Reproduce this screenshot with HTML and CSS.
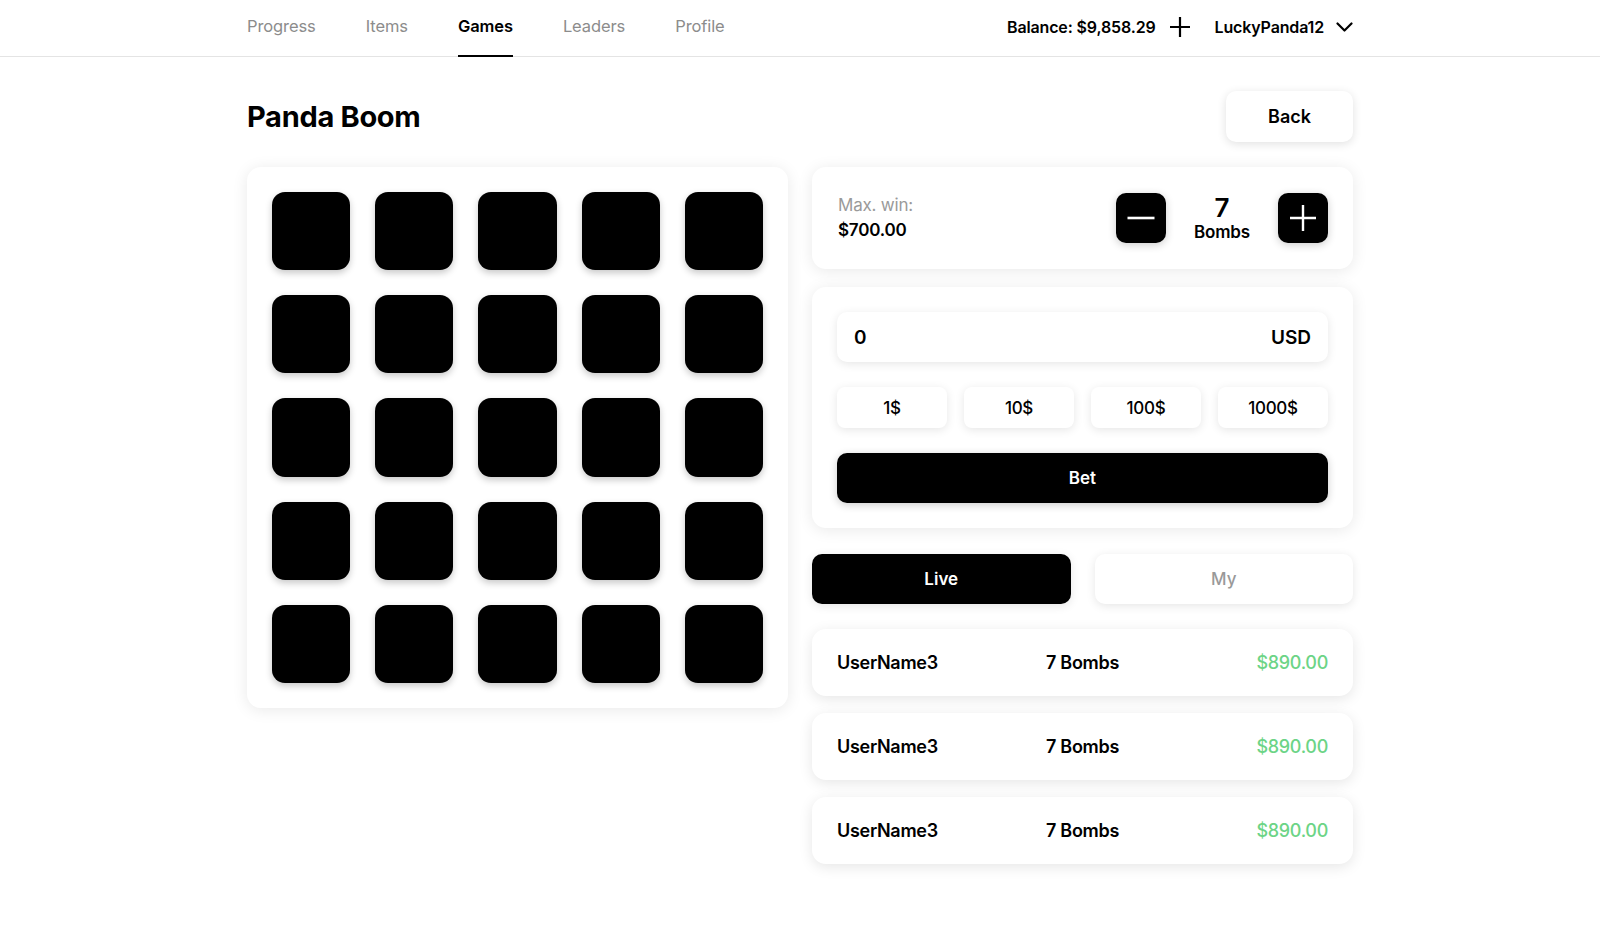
FILE: index.html
```html
<!DOCTYPE html>
<html lang="en">
<head>
<meta charset="utf-8">
<title>Panda Boom</title>
<link rel="stylesheet" href="styles.css">
</head>
<body>
<header class="topbar">
  <div class="topbar-inner">
    <nav class="nav">
      <a class="nav-link">Progress</a>
      <a class="nav-link">Items</a>
      <a class="nav-link is-active">Games</a>
      <a class="nav-link">Leaders</a>
      <a class="nav-link">Profile</a>
    </nav>
    <div class="account">
      <span class="balance">Balance: $9,858.29</span>
      <svg class="icon-plus" width="20" height="20" viewBox="0 0 20 20" fill="none" stroke="#000" stroke-width="2.2" stroke-linecap="square"><path d="M10 1v18M1 10h18"/></svg>
      <span class="username">LuckyPanda12</span>
      <svg class="icon-chevron" width="17" height="10" viewBox="0 0 17 10" fill="none" stroke="#000" stroke-width="2.2" stroke-linecap="round" stroke-linejoin="round"><path d="M1.5 1.5l7 7 7-7"/></svg>
    </div>
  </div>
</header>

<main class="page">
  <div class="title-row">
    <h1 class="title">Panda Boom</h1>
    <button class="btn-back">Back</button>
  </div>

  <div class="layout">
    <section class="board">
      <div class="tile"></div><div class="tile"></div><div class="tile"></div><div class="tile"></div><div class="tile"></div>
      <div class="tile"></div><div class="tile"></div><div class="tile"></div><div class="tile"></div><div class="tile"></div>
      <div class="tile"></div><div class="tile"></div><div class="tile"></div><div class="tile"></div><div class="tile"></div>
      <div class="tile"></div><div class="tile"></div><div class="tile"></div><div class="tile"></div><div class="tile"></div>
      <div class="tile"></div><div class="tile"></div><div class="tile"></div><div class="tile"></div><div class="tile"></div>
    </section>

    <section class="side">
      <div class="card win-card">
        <div class="win">
          <div class="win-label">Max. win:</div>
          <div class="win-value">$700.00</div>
        </div>
        <div class="bombs">
          <button class="step">
            <svg width="28" height="28" viewBox="0 0 28 28" fill="none" stroke="#fff" stroke-width="2.6"><path d="M0.5 14h27"/></svg>
          </button>
          <div class="bombs-count">
            <div class="bombs-num">7</div>
            <div class="bombs-label">Bombs</div>
          </div>
          <button class="step">
            <svg width="28" height="28" viewBox="0 0 28 28" fill="none" stroke="#fff" stroke-width="2.4"><path d="M14 1v26M1 14h26"/></svg>
          </button>
        </div>
      </div>

      <div class="card bet-card">
        <div class="amount">
          <span>0</span>
          <span>USD</span>
        </div>
        <div class="chips">
          <button class="chip">1$</button>
          <button class="chip">10$</button>
          <button class="chip">100$</button>
          <button class="chip">1000$</button>
        </div>
        <button class="btn-bet">Bet</button>
      </div>

      <div class="tabs">
        <button class="tab is-active">Live</button>
        <button class="tab">My</button>
      </div>

      <div class="feed">
        <div class="feed-row">
          <span class="feed-user">UserName3</span>
          <span class="feed-bombs">7 Bombs</span>
          <span class="feed-win">$890.00</span>
        </div>
        <div class="feed-row">
          <span class="feed-user">UserName3</span>
          <span class="feed-bombs">7 Bombs</span>
          <span class="feed-win">$890.00</span>
        </div>
        <div class="feed-row">
          <span class="feed-user">UserName3</span>
          <span class="feed-bombs">7 Bombs</span>
          <span class="feed-win">$890.00</span>
        </div>
      </div>
    </section>
  </div>
</main>
</body>
</html>
```

FILE: styles.css
```css
* {
  box-sizing: border-box;
}

body {
  margin: 0;
  background: #fff;
  color: #000;
  font-family: Inter, "Noto Sans", "Liberation Sans", sans-serif;
}

button {
  font-family: inherit;
  border: 0;
  cursor: pointer;
  padding: 0;
}

/* ---------- top bar ---------- */
.topbar {
  height: 57px;
  box-shadow: inset 0 -1px 0 #e4e4e4;
}

.topbar-inner {
  width: 1106px;
  height: 57px;
  margin: 0 auto;
  display: flex;
  justify-content: space-between;
}

.nav {
  display: flex;
  gap: 50px;
}

.nav-link {
  display: flex;
  align-items: center;
  padding-bottom: 4px;
  border-bottom: 2px solid transparent;
  font-size: 16.5px;
  color: #8c8c8c;
  letter-spacing: -0.1px;
}

.nav-link.is-active {
  color: #000;
  font-weight: 600;
  border-bottom-color: #000;
}

.account {
  display: flex;
  align-items: center;
  padding-bottom: 4px;
  font-size: 16px;
  font-weight: 600;
  letter-spacing: -0.15px;
}

.icon-plus {
  margin-left: 14px;
}

.username {
  margin-left: 25px;
}

.icon-chevron {
  margin-left: 12px;
}

/* ---------- page ---------- */
.page {
  width: 1106px;
  margin: 34px auto 0;
  padding-bottom: 80px;
}

.title-row {
  display: flex;
  justify-content: space-between;
  align-items: center;
  height: 51px;
}

.title {
  margin: 0;
  font-size: 29px;
  font-weight: 700;
  letter-spacing: -0.3px;
}

.btn-back {
  width: 127px;
  height: 51px;
  background: #fff;
  border-radius: 10px;
  box-shadow: 0 2px 10px rgba(0, 0, 0, 0.12);
  font-size: 18px;
  font-weight: 600;
  color: #000;
}

.layout {
  display: grid;
  grid-template-columns: 541px 541px;
  gap: 24px;
  margin-top: 25px;
  align-items: start;
}

.card,
.board {
  background: #fff;
  border-radius: 14px;
  box-shadow: 0 2px 16px rgba(0, 0, 0, 0.09);
}

/* ---------- board ---------- */
.board {
  padding: 25px;
  display: grid;
  grid-template-columns: repeat(5, 1fr);
  gap: 25px;
}

.tile {
  aspect-ratio: 1;
  background: #000;
  border-radius: 13px;
  box-shadow: 0 3px 7px rgba(0, 0, 0, 0.22);
}

/* ---------- side panel ---------- */
.side {
  display: flex;
  flex-direction: column;
}

.win-card {
  height: 102px;
  padding: 0 25px 0 26px;
  display: flex;
  align-items: center;
  justify-content: space-between;
  margin-bottom: 18px;
}

.win {
  font-size: 17px;
  line-height: 25px;
  letter-spacing: -0.2px;
}

.win-label {
  color: #9a9a9a;
}

.win-value {
  font-weight: 600;
}

.bombs {
  display: flex;
  align-items: center;
  gap: 26px;
}

.step {
  width: 50px;
  height: 50px;
  border-radius: 10px;
  background: #000;
  display: flex;
  align-items: center;
  justify-content: center;
  box-shadow: 0 2px 8px rgba(0, 0, 0, 0.2);
}

.step svg {
  display: block;
}

.bombs-count {
  width: 60px;
  text-align: center;
  margin-top: 1px;
}

.bombs-num {
  font-size: 26px;
  font-weight: 600;
  line-height: 27px;
}

.bombs-label {
  font-size: 17px;
  font-weight: 600;
  line-height: 22px;
  letter-spacing: -0.2px;
}

.bet-card {
  padding: 25px;
  display: flex;
  flex-direction: column;
  gap: 25px;
  margin-bottom: 26px;
}

.amount {
  height: 50px;
  border-radius: 10px;
  background: #fff;
  box-shadow: 0 2px 10px rgba(0, 0, 0, 0.1);
  padding: 0 17px;
  display: flex;
  align-items: center;
  justify-content: space-between;
  font-size: 19px;
  font-weight: 600;
}

.chips {
  display: grid;
  grid-template-columns: repeat(4, 1fr);
  gap: 17px;
}

.chip {
  height: 41px;
  border-radius: 8px;
  background: #fff;
  box-shadow: 0 2px 10px rgba(0, 0, 0, 0.1);
  font-size: 17px;
  font-weight: 500;
  color: #000;
  letter-spacing: -0.3px;
}

.btn-bet {
  height: 50px;
  border-radius: 10px;
  background: #000;
  color: #fff;
  font-size: 17px;
  font-weight: 600;
  box-shadow: 0 2px 8px rgba(0, 0, 0, 0.2);
}

.tabs {
  display: grid;
  grid-template-columns: 1fr 1fr;
  gap: 24px;
  margin-bottom: 25px;
}

.tab {
  height: 50px;
  border-radius: 10px;
  background: #fff;
  box-shadow: 0 2px 10px rgba(0, 0, 0, 0.1);
  font-size: 17px;
  font-weight: 500;
  color: #999;
}

.tab.is-active {
  background: #000;
  color: #fff;
  font-weight: 600;
}

.feed {
  display: flex;
  flex-direction: column;
  gap: 17.5px;
}

.feed-row {
  height: 66.5px;
  border-radius: 14px;
  background: #fff;
  box-shadow: 0 3px 14px rgba(0, 0, 0, 0.1);
  padding: 0 25px;
  display: grid;
  grid-template-columns: 1fr auto 1fr;
  align-items: center;
  font-size: 18px;
  font-weight: 600;
  letter-spacing: -0.3px;
}

.feed-bombs {
  text-align: center;
}

.feed-win {
  text-align: right;
  color: #6cd486;
  font-weight: 500;
}
```
